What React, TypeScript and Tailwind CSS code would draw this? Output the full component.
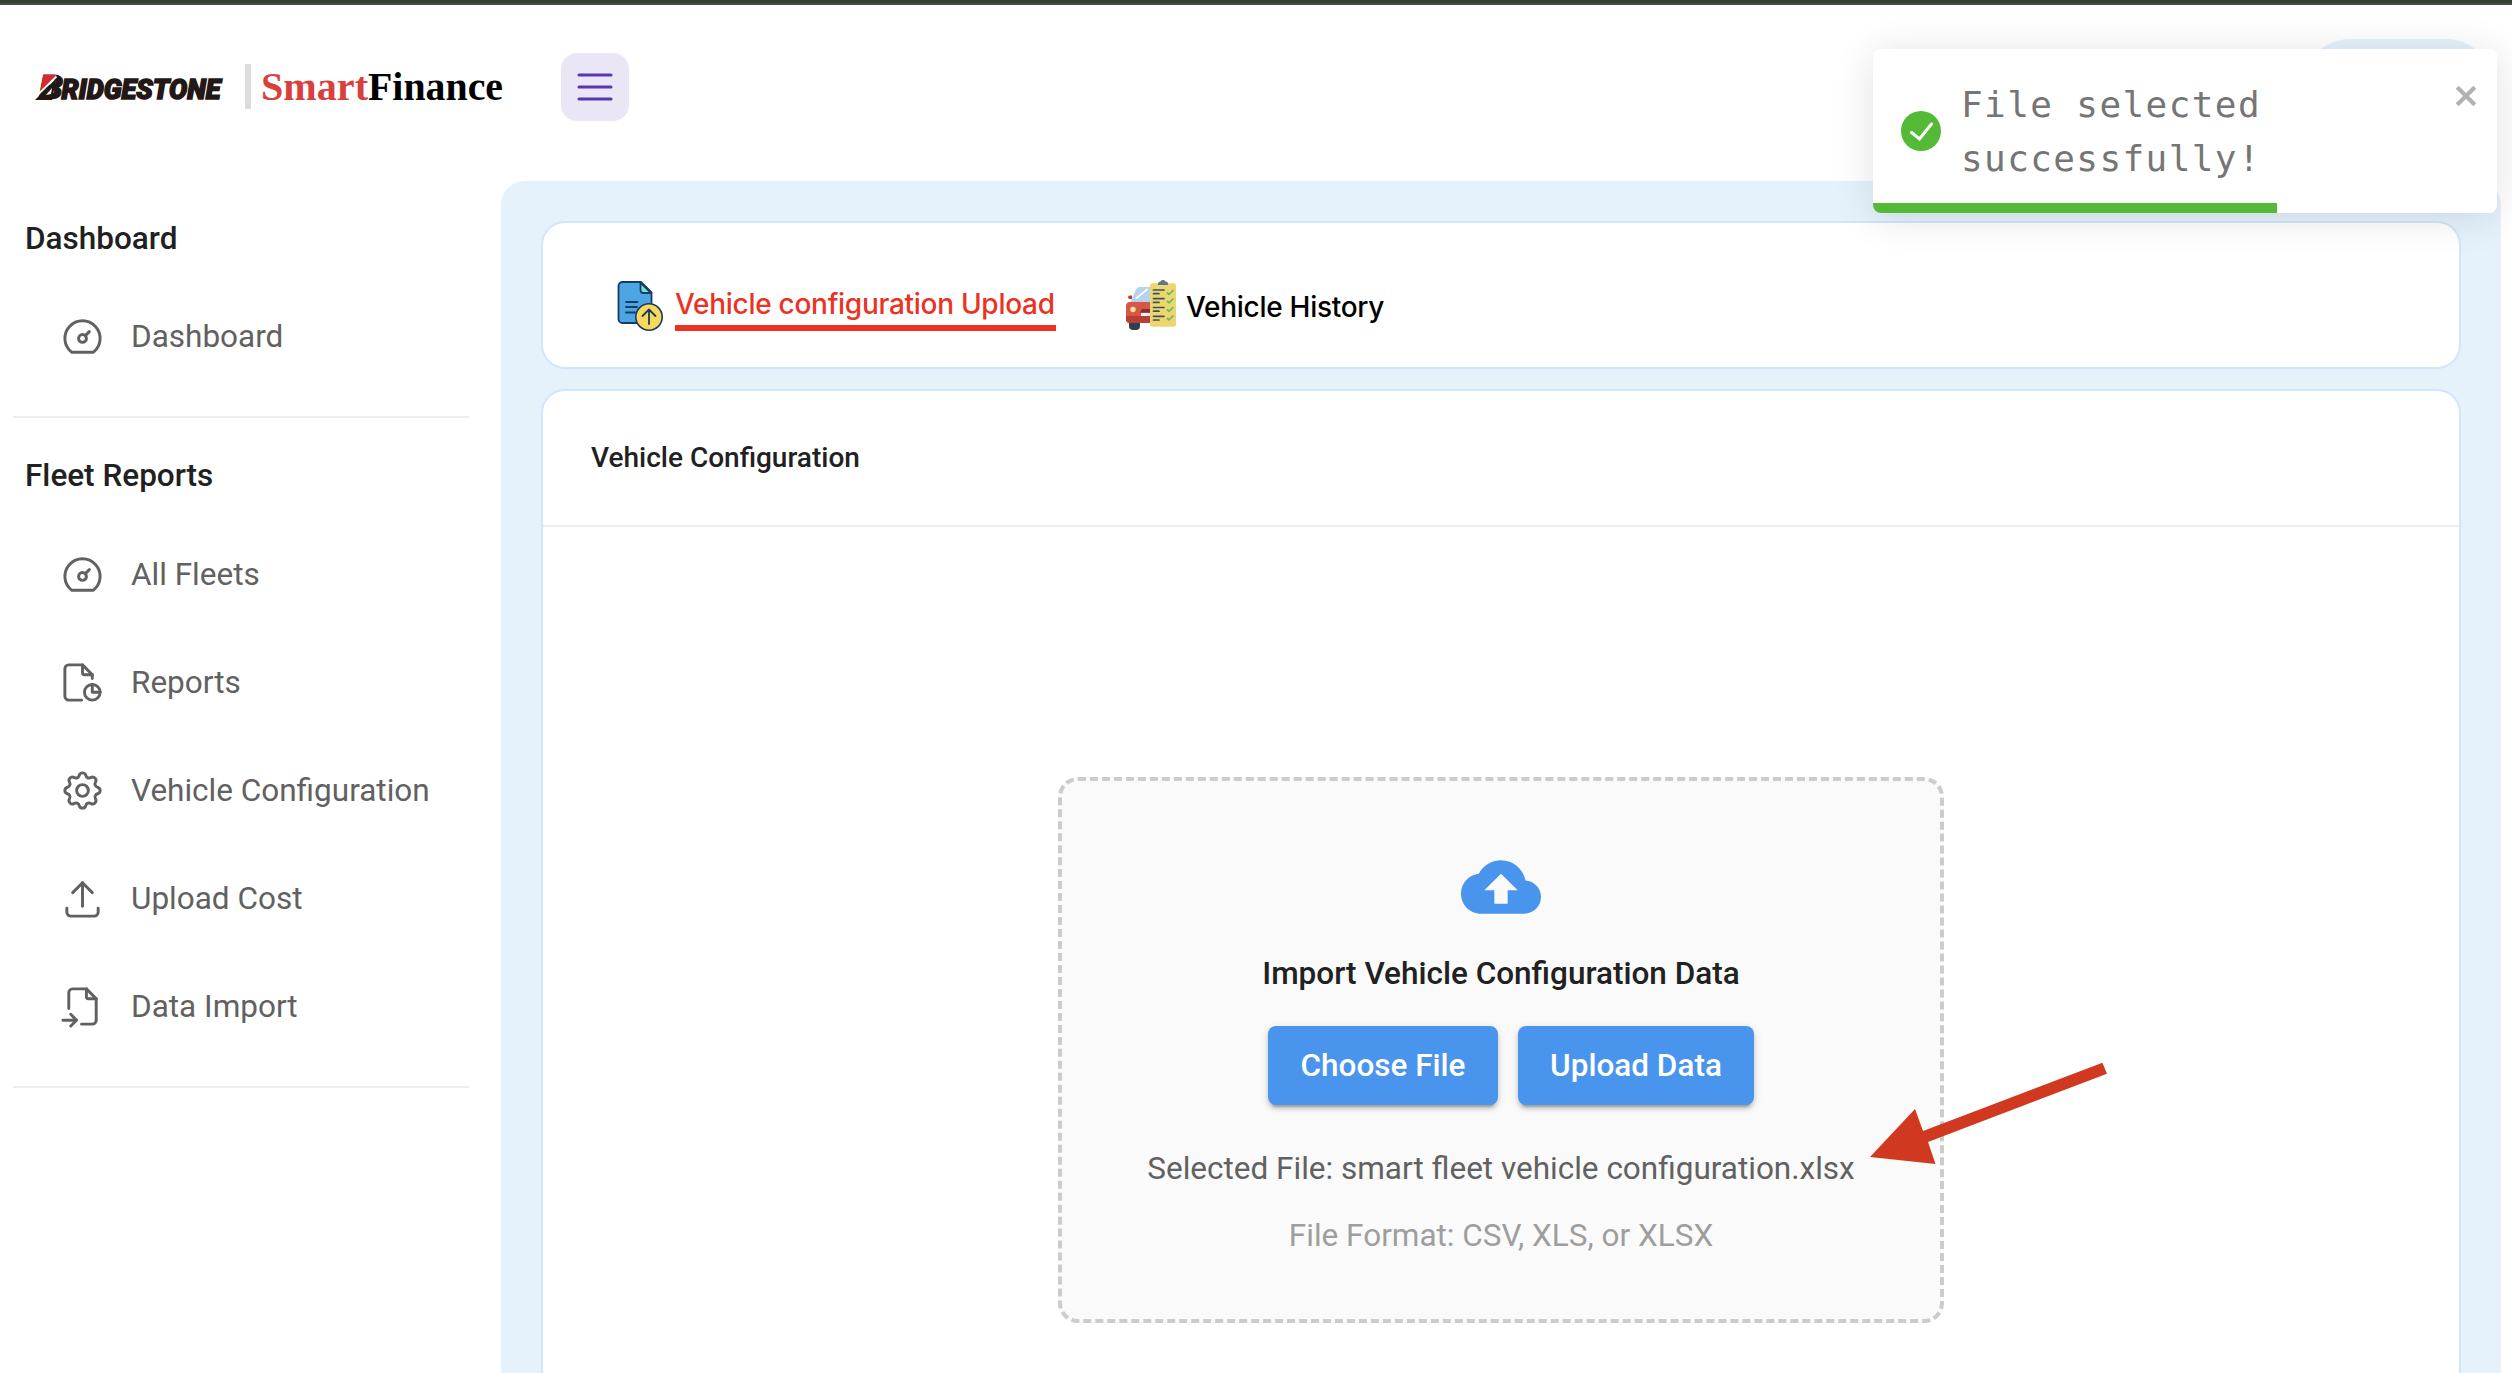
import type { ReactNode } from "react";

const icons: Record<string, string[]> = {
  dashboard: [
    "M10 13a2 2 0 1 0 4 0a2 2 0 1 0 -4 0",
    "M13.45 11.55l2.05 -2.05",
    "M6.4 20a9 9 0 1 1 11.2 0z",
  ],
  report: [
    "M13 17a4 4 0 1 0 8 0a4 4 0 1 0 -8 0",
    "M17 13v4h4",
    "M12 3v4a1 1 0 0 0 1 1h4",
    "M11.5 21h-6.5a2 2 0 0 1 -2 -2v-14a2 2 0 0 1 2 -2h7l5 5v2",
  ],
  settings: [
    "M10.325 4.317c.426 -1.756 2.924 -1.756 3.35 0a1.724 1.724 0 0 0 2.573 1.066c1.543 -.94 3.31 .826 2.37 2.37a1.724 1.724 0 0 0 1.065 2.572c1.756 .426 1.756 2.924 0 3.35a1.724 1.724 0 0 0 -1.066 2.573c.94 1.543 -.826 3.31 -2.37 2.37a1.724 1.724 0 0 0 -2.572 1.065c-.426 1.756 -2.924 1.756 -3.35 0a1.724 1.724 0 0 0 -2.573 -1.066c-1.543 .94 -3.31 -.826 -2.37 -2.37a1.724 1.724 0 0 0 -1.065 -2.572c-1.756 -.426 -1.756 -2.924 0 -3.35a1.724 1.724 0 0 0 1.066 -2.573c-.94 -1.543 .826 -3.31 2.37 -2.37c1 .608 2.296 .07 2.572 -1.065z",
    "M9 12a3 3 0 1 0 6 0a3 3 0 0 0 -6 0",
  ],
  upload: [
    "M4 17v2a2 2 0 0 0 2 2h12a2 2 0 0 0 2 -2v-2",
    "M7 9l5 -5l5 5",
    "M12 4v12",
  ],
  fileImport: [
    "M14 3v4a1 1 0 0 0 1 1h4",
    "M5 13v-8a2 2 0 0 1 2 -2h7l5 5v11a2 2 0 0 1 -2 2h-5.5",
    "M2 19h7m-3 -3l3 3l-3 3",
  ],
  menu: ["M4 6h16", "M4 12h16", "M4 18h16"],
};

function LineIcon({ name, size = 47 }: { name: string; size?: number }) {
  return (
    <svg
      viewBox="0 0 24 24"
      width={size}
      height={size}
      fill="none"
      stroke="currentColor"
      strokeWidth="1.5"
      strokeLinecap="round"
      strokeLinejoin="round"
      className="shrink-0"
    >
      {icons[name].map((d) => (
        <path key={d} d={d} />
      ))}
    </svg>
  );
}

function BrandLogo() {
  return (
    <svg width="480" height="56" viewBox="0 0 480 56" className="block shrink-0">
      <g
        fontFamily="Roboto, 'Liberation Sans', sans-serif"
        fontWeight="900"
        fontStyle="italic"
        fill="#231815"
        stroke="#231815"
      >
        <text x="14" y="40" fontSize="33" strokeWidth="1" textLength="24" lengthAdjust="spacingAndGlyphs">
          B
        </text>
        <text x="36.5" y="40" fontSize="27.500" strokeWidth="1.5" textLength="159" lengthAdjust="spacingAndGlyphs">
          RIDGESTONE
        </text>
      </g>
      <path d="M10 41L31.500 19L27 41Z" fill="#231815" />
      <path d="M18.300 16H31.700L15.300 32Z" fill="#d7282f" />
      <path d="M13 35.500L31.500 17.500" stroke="#fff" strokeWidth="1.800" />
      <path d="M21 36L27 29L26 35Z" fill="#fff" />
      <rect x="220" y="5" width="6" height="45" fill="#dcdcdc" />
      <g fontFamily="'Liberation Serif', serif" fontWeight="700" fontSize="40">
        <text x="236" y="41" fill="#d9403c" textLength="107" lengthAdjust="spacingAndGlyphs">
          Smart
        </text>
        <text x="343" y="41" fill="#000" textLength="135" lengthAdjust="spacingAndGlyphs">
          Finance
        </text>
      </g>
    </svg>
  );
}

function NavItem({ icon, label }: { icon: string; label: string }) {
  return (
    <li className="flex h-[108px] items-center pl-[59px] text-[31.5px] text-[#616161]">
      <LineIcon name={icon} />
      <span className="ml-[25px] pt-0.5">{label}</span>
    </li>
  );
}

function NavSection({ title, tall, children }: { title: string; tall?: boolean; children: ReactNode }) {
  return (
    <section className="mr-8 ml-[13px] border-b-2 border-[#eeeeee] pb-[26px]">
      <h2
        className={
          tall
            ? "h-[102px] pt-[38px] pl-3 text-[31.5px] leading-10 font-medium text-[#212121]"
            : "h-[101px] pt-[38px] pl-3 text-[31.5px] leading-10 font-medium text-[#212121]"
        }
      >
        {title}
      </h2>
      <ul className="-ml-[13px]">{children}</ul>
    </section>
  );
}

function FileUploadIcon() {
  return (
    <svg width="50" height="50" viewBox="0 0 50 50" strokeLinecap="round" strokeLinejoin="round" className="shrink-0">
      <path d="M5.5 1H24L34.5 11.5V38a4 4 0 0 1 -4 4H5.500a4 4 0 0 1 -4 -4V5a4 4 0 0 1 4 -4Z" fill="#4ba6e3" stroke="#193a66" strokeWidth="1.8" />
      <path d="M23.500 1.500V9a3 3 0 0 0 3 3H34Z" fill="#6fe7cd" stroke="#193a66" strokeWidth="1.8" />
      <path d="M9 21H20.500M9 26H20M9 31.500H18" stroke="#193a66" strokeWidth="1.8" />
      <circle cx="32" cy="36" r="13.200" fill="#f8d95b" stroke="#193a66" strokeWidth="1.6" />
      <path d="M32 43V29M25.500 35L32 28.500L38.500 35" fill="none" stroke="#193a66" strokeWidth="1.8" />
    </svg>
  );
}

function VehicleHistoryIcon() {
  return (
    <svg width="50" height="50" viewBox="0 0 50 50" className="shrink-0">
      <path d="M3 40H14V46a4 4 0 0 1 -4 4H7a4 4 0 0 1 -4 -4Z" fill="#2f3e50" />
      <path d="M6 15.500H3.500a1.800 1.800 0 0 0 0 3.500H6Z" fill="#c0392b" />
      <path d="M4.500 22L10 9.500a4 4 0 0 1 3.500 -2.500H26V22Z" fill="#b6d2ee" />
      <path d="M10.500 18L21 9.500" stroke="#fff" strokeWidth="1.800" strokeLinecap="round" />
      <path d="M4 22H26V43H4a4 4 0 0 1 -4 -4V26a4 4 0 0 1 4 -4Z" fill="#d75645" />
      <path d="M0 36H26V43H4a4 4 0 0 1 -4 -4Z" fill="#b64132" />
      <circle cx="7" cy="29.500" r="2.700" fill="#fbe0a0" />
      <path d="M16 29H26V32.500H14Z" fill="#7f2f36" />
      <path d="M15 33H26V36H15Z" fill="#ecf0f1" />
      <rect x="24" y="3.300" width="26" height="43.500" rx="2.500" fill="#edd66d" />
      <path d="M32 5V3.500a2.500 2.500 0 0 1 2.500 -2A2.800 2.800 0 0 1 39.500 1.500a2.500 2.500 0 0 1 2.500 2V5Z" fill="#5d7683" />
      <path
        d="M27.500 10H38M27.500 13.700H33M27.500 18.700H38M27.500 22.400H33M27.500 27.500H38M27.500 31.200H33M27.500 36.300H38M27.500 40H33"
        stroke="#3f5264"
        strokeWidth="1.700"
        strokeLinecap="round"
      />
      <path
        d="M41 12.500L43 14.300L47.500 10M41 21L43 22.800L47.500 18.500M41 29.500L43 31.300L47.500 27M41 38L43 39.800L47.500 35.500"
        stroke="#64b96a"
        strokeWidth="1.700"
        fill="none"
      />
    </svg>
  );
}

function ActionButton({ children, width }: { children: string; width: string }) {
  return (
    <button
      className={`${width} h-[79px] rounded-lg bg-[#4994ec] text-[31.5px] font-medium text-white shadow-[0_6px_2px_-4px_rgba(0,0,0,0.2),0_4px_4px_0_rgba(0,0,0,0.14),0_2px_10px_0_rgba(0,0,0,0.12)]`}
    >
      {children}
    </button>
  );
}

function UploadCard() {
  return (
    <section className="flex h-[1020px] shrink-0 flex-col rounded-3xl border-2 border-[#d1e6fa] bg-white">
      <h3 className="h-[136px] shrink-0 border-b-2 border-[#eeeeee] pt-[47px] pl-12 text-[28px] leading-10 font-medium text-[#212121]">
        Vehicle Configuration
      </h3>
      <div className="mx-auto mt-[250px] flex h-[546px] w-[886px] shrink-0 flex-col items-center rounded-[20px] border-4 border-dashed border-[#cccccc] bg-[#fafafa] pt-[66px]">
        <svg width="80" height="80" viewBox="0 0 24 24" fill="#4994ec" className="shrink-0">
          <path d="M19.35 10.04C18.67 6.59 15.64 4 12 4 9.11 4 6.6 5.64 5.35 8.04 2.34 8.36 0 10.91 0 14c0 3.31 2.69 6 6 6h13c2.76 0 5-2.240 5-5 0-2.640-2.050-4.780-4.650-4.960zM14 13v4h-4v-4H7l5-5 5 5h-3z" />
        </svg>
        <h4 className="mt-[27px] text-[31.5px] leading-10 font-medium text-[#212121]">Import Vehicle Configuration Data</h4>
        <div className="mt-8 flex gap-5 pl-5">
          <ActionButton width="w-[230px]">Choose File</ActionButton>
          <ActionButton width="w-[236px]">Upload Data</ActionButton>
        </div>
        <p className="mt-11 text-[31.5px] leading-10 text-[#616161]">
          Selected File: smart fleet vehicle configuration.xlsx
        </p>
        <p className="mt-[27px] text-[31.5px] leading-10 text-[#9e9e9e]">File Format: CSV, XLS, or XLSX</p>
      </div>
    </section>
  );
}

function Toast() {
  return (
    <div className="absolute top-[49px] left-[1873px] h-[164px] w-[624px] rounded-lg shadow-[0_4px_40px_0_rgba(0,0,0,0.12)]">
      <div className="flex h-full flex-col overflow-hidden rounded-lg bg-white">
        <div className="flex h-[154px] pl-7">
          <svg width="40" height="40" viewBox="0 0 40 40" className="mt-[62px] shrink-0">
            <circle cx="20" cy="20" r="20" fill="#54b937" />
            <path d="M10.500 21.500L18.500 28L30.500 13" fill="none" stroke="#fff" strokeWidth="3" strokeLinecap="round" />
          </svg>
          <p className="mt-[29px] ml-5 w-[460px] font-['DejaVu_Sans_Mono',monospace] text-[36px] leading-[54px] tracking-[1.400px] text-[#757575]">
            File selected successfully!
          </p>
          <svg width="22" height="22" viewBox="0 0 22 22" className="mt-[35.500px] ml-[34px] shrink-0">
            <path d="M2.200 2.200L19.800 19.800M19.800 2.200L2.200 19.800" stroke="#b2b2b2" strokeWidth="4.200" />
          </svg>
        </div>
        <div className="h-[10px] w-[404px] bg-[#54b937]" />
      </div>
    </div>
  );
}

export default function App() {
  return (
    <div className="relative h-[1373px] w-[2512px] overflow-hidden bg-white font-[Roboto,sans-serif]">
      <div className="h-[5px] border-b-2 border-[#444c44] bg-[#344030]" />
      <header className="flex h-[176px] items-start">
        <div className="mt-[54px] ml-[25px]">
          <BrandLogo />
        </div>
        <button className="mt-12 ml-14 flex size-[68px] items-center justify-center rounded-2xl bg-[#ebe6f5] text-[#5a35b0]">
          <LineIcon name="menu" size={48} />
        </button>
        <div className="mt-[34px] mr-[18px] ml-auto h-[96px] w-[192px] rounded-full bg-[#e4f2fc]" />
      </header>
      <div className="flex h-[1192px]">
        <nav className="w-[501px] shrink-0">
          <NavSection title="Dashboard">
            <NavItem icon="dashboard" label="Dashboard" />
          </NavSection>
          <NavSection title="Fleet Reports" tall>
            <NavItem icon="dashboard" label="All Fleets" />
            <NavItem icon="report" label="Reports" />
            <NavItem icon="settings" label="Vehicle Configuration" />
            <NavItem icon="upload" label="Upload Cost" />
            <NavItem icon="fileImport" label="Data Import" />
          </NavSection>
        </nav>
        <main className="flex w-[2000px] shrink-0 flex-col gap-5 rounded-t-3xl bg-[#e5f2fc] px-10 pt-10">
          <div className="flex h-[148px] shrink-0 rounded-3xl border-2 border-[#d1e6fa] bg-white font-[Inter,sans-serif] text-[28px] font-medium">
            <a className="mt-[58px] ml-[74px] flex items-start">
              <FileUploadIcon />
              <span className="ml-2 h-[50px] w-[381px] border-b-[6px] border-[#eb3223] pt-[3px] leading-10 tracking-[-0.280px] whitespace-nowrap text-[#eb3223]">
                Vehicle configuration Upload
              </span>
            </a>
            <a className="mt-[57px] ml-[70px] flex items-start">
              <VehicleHistoryIcon />
              <span className="ml-[10px] pt-[7px] leading-10 tracking-[-0.280px] whitespace-nowrap text-black">Vehicle History</span>
            </a>
          </div>
          <UploadCard />
        </main>
      </div>
      <Toast />
      <svg width="240" height="106" viewBox="1869 1060 240 106" className="absolute top-[1060px] left-[1869px]">
        <path d="M1870 1157L1915 1109L1923 1131L2102.400 1062.700L2107 1073.700L1928 1142L1935.500 1164Z" fill="#d0391f" />
      </svg>
    </div>
  );
}
